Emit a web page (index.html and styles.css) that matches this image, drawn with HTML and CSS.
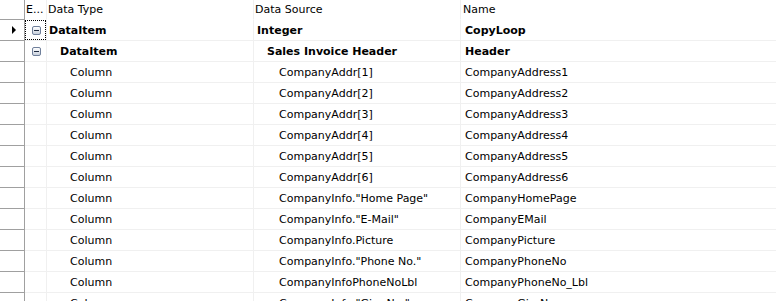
FILE: index.html
```html
<!DOCTYPE html>
<html>
<head>
<meta charset="utf-8">
<link rel="stylesheet" href="styles.css">
</head>
<body>
<div class="grid">
  <div class="row head">
    <div class="rh"></div>
    <div class="c ce">E...</div>
    <div class="c ct">Data Type</div>
    <div class="c cs">Data Source</div>
    <div class="c cn">Name</div>
  </div>
  <div class="row b">
    <div class="rh"><span class="arrow"></span></div>
    <div class="c ce"><span class="focus"><span class="box"></span></span></div>
    <div class="c ct l0">DataItem</div>
    <div class="c cs l0">Integer</div>
    <div class="c cn">CopyLoop</div>
  </div>
  <div class="row b">
    <div class="rh"></div>
    <div class="c ce"><span class="nofocus"><span class="box"></span></span></div>
    <div class="c ct l1">DataItem</div>
    <div class="c cs l1">Sales Invoice Header</div>
    <div class="c cn">Header</div>
  </div>
  <div class="row"><div class="rh"></div><div class="c ce"></div><div class="c ct l2">Column</div><div class="c cs l2">CompanyAddr[1]</div><div class="c cn">CompanyAddress1</div></div>
  <div class="row"><div class="rh"></div><div class="c ce"></div><div class="c ct l2">Column</div><div class="c cs l2">CompanyAddr[2]</div><div class="c cn">CompanyAddress2</div></div>
  <div class="row"><div class="rh"></div><div class="c ce"></div><div class="c ct l2">Column</div><div class="c cs l2">CompanyAddr[3]</div><div class="c cn">CompanyAddress3</div></div>
  <div class="row"><div class="rh"></div><div class="c ce"></div><div class="c ct l2">Column</div><div class="c cs l2">CompanyAddr[4]</div><div class="c cn">CompanyAddress4</div></div>
  <div class="row"><div class="rh"></div><div class="c ce"></div><div class="c ct l2">Column</div><div class="c cs l2">CompanyAddr[5]</div><div class="c cn">CompanyAddress5</div></div>
  <div class="row"><div class="rh"></div><div class="c ce"></div><div class="c ct l2">Column</div><div class="c cs l2">CompanyAddr[6]</div><div class="c cn">CompanyAddress6</div></div>
  <div class="row"><div class="rh"></div><div class="c ce"></div><div class="c ct l2">Column</div><div class="c cs l2">CompanyInfo."Home Page"</div><div class="c cn">CompanyHomePage</div></div>
  <div class="row"><div class="rh"></div><div class="c ce"></div><div class="c ct l2">Column</div><div class="c cs l2">CompanyInfo."E-Mail"</div><div class="c cn">CompanyEMail</div></div>
  <div class="row"><div class="rh"></div><div class="c ce"></div><div class="c ct l2">Column</div><div class="c cs l2">CompanyInfo.Picture</div><div class="c cn">CompanyPicture</div></div>
  <div class="row"><div class="rh"></div><div class="c ce"></div><div class="c ct l2">Column</div><div class="c cs l2">CompanyInfo."Phone No."</div><div class="c cn">CompanyPhoneNo</div></div>
  <div class="row"><div class="rh"></div><div class="c ce"></div><div class="c ct l2">Column</div><div class="c cs l2">CompanyInfoPhoneNoLbl</div><div class="c cn">CompanyPhoneNo_Lbl</div></div>
  <div class="row"><div class="rh"></div><div class="c ce"></div><div class="c ct l2">Column</div><div class="c cs l2">CompanyInfo."Giro No."</div><div class="c cn">CompanyGiroNo</div></div>
</div>
</body>
</html>
```
FILE: styles.css
```css
html, body {
  margin: 0;
  padding: 0;
  background: #fff;
  overflow: hidden;
}
.grid {
  width: 776px;
  font-family: "DejaVu Sans", Tahoma, sans-serif;
  font-size: 11px;
  color: #000;
}
.row {
  display: flex;
  height: 21px;
}
.row.head {
  height: 20px;
}
.rh {
  width: 24px;
  flex: none;
  border-right: 1px solid #a0a0a0;
  border-bottom: 1px solid #a0a0a0;
  display: flex;
  align-items: center;
  justify-content: center;
}
.c {
  flex: none;
  box-sizing: border-box;
  border-right: 1px solid #f0f0f0;
  border-bottom: 1px solid #f0f0f0;
  display: flex;
  align-items: center;
  white-space: nowrap;
  overflow: hidden;
}
.head .c {
  border-bottom: 1px solid transparent;
  padding-left: 1px;
  align-items: center;
}
.ce { width: 22px; }
.ct { width: 207px; }
.cs { width: 207px; }
.cn { flex: 1; padding-left: 4px; border-right: none; }
.head .cn { padding-left: 2px; }
.ct.l0 { padding-left: 2px; }
.ct.l1 { padding-left: 13px; }
.ct.l2 { padding-left: 23px; }
.cs.l0 { padding-left: 3px; }
.cs.l1 { padding-left: 13px; }
.cs.l2 { padding-left: 25px; }
.b .c { font-weight: bold; }
.arrow {
  width: 0;
  height: 0;
  border-top: 4px solid transparent;
  border-bottom: 4px solid transparent;
  border-left: 4px solid #000;
  margin-left: 4px;
}
.focus, .nofocus {
  width: 21px;
  height: 20px;
  box-sizing: border-box;
  display: flex;
  align-items: center;
  justify-content: center;
  padding-left: 1px;
}
.focus {
  border: 1px dotted #000;
}
.box {
  width: 9px;
  height: 9px;
  box-sizing: border-box;
  border: 1px solid #6f7f9a;
  border-radius: 2px;
  background: linear-gradient(#ffffff, #c8d0dc);
  position: relative;
}
.box::after {
  content: "";
  position: absolute;
  left: 1px;
  right: 1px;
  top: 3px;
  height: 1px;
  background: #1e2a40;
}
```
